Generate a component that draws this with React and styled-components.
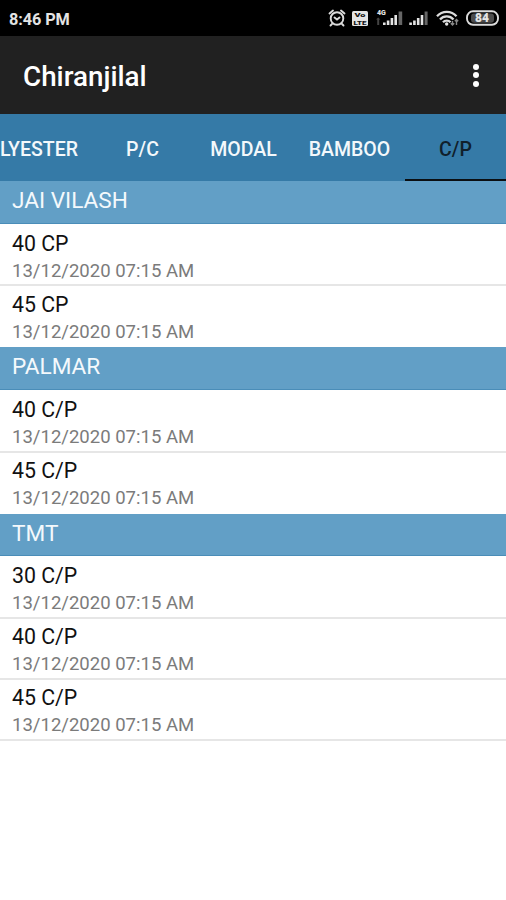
import styled, {createGlobalStyle} from 'styled-components';

const GlobalStyle = createGlobalStyle`
    * {
        box-sizing: border-box;
    }

    body {
        margin: 0;
        background-color: #fff;
        font-family: Roboto, "Liberation Sans", sans-serif;
    }
`;

const Screen = styled.div`
    width: 506px;
    height: 900px;
    overflow: hidden;
    background-color: #fff;
`;

const StatusBar = styled.header`
    display: flex;
    align-items: center;
    justify-content: space-between;
    height: 36px;
    padding: 0 7px 0 9px;
    background-color: #000;
    color: #e4e4e4;
`;

const Clock = styled.span`
    padding-top: 2px;
    font-size: 16.3px;
    font-weight: 700;
    letter-spacing: -0.1px;
`;

const StatusIcons = styled.svg`
    display: block;
    width: 172px;
    height: 24px;
`;

const AppBar = styled.div`
    display: flex;
    align-items: center;
    justify-content: space-between;
    height: 78.3px;
    padding: 3px 27px 0 23px;
    background-color: #212121;
`;

const Title = styled.h1`
    margin: 0;
    color: #fff;
    font-size: 27.8px;
    font-weight: 500;
`;

const MenuButton = styled.button`
    display: flex;
    flex-direction: column;
    gap: 2.5px;
    margin-top: -3px;
    padding: 0;
    border: none;
    background: none;
`;

const Dot = styled.span`
    width: 6px;
    height: 6px;
    border-radius: 50%;
    background-color: #fff;
`;

const TabBar = styled.nav`
    display: flex;
    justify-content: flex-end;
    height: 67px;
    background-color: #357aa7;
`;

const Tab = styled.button`
    flex: none;
    width: ${({$width}) => $width}px;
    padding: 5px 0 0;
    border: none;
    border-bottom: 2px solid ${({$active}) => ($active ? '#0b0f12' : 'transparent')};
    background: none;
    color: ${({$active}) => ($active ? '#10202b' : '#f3f8fb')};
    font-family: inherit;
    font-size: 19.5px;
    font-weight: 500;
    white-space: nowrap;
`;

const Group = styled.section`
    &:not(:last-child) > :last-child {
        border-bottom-color: transparent;
    }
`;

const GroupHeader = styled.h2`
    height: 42.3px;
    margin: 0;
    padding: 0 12px;
    border-bottom: 1px solid #4a8db8;
    background-color: #629fc6;
    color: #f4f9fc;
    font-size: 22.6px;
    font-weight: 400;
    line-height: 40px;
`;

const Row = styled.div`
    height: ${({$first}) => ($first ? 62.9 : 61)}px;
    padding: ${({$first}) => ($first ? 7.5 : 5.6)}px 12px 0;
    border-bottom: 2px solid #e6e6e6;
`;

const RowTitle = styled.div`
    color: #111;
    font-size: 21.3px;
    line-height: 26px;
`;

const RowDate = styled.div`
    color: #7b7b7b;
    font-size: 18.55px;
    line-height: 28px;
`;

const tabs = [
    {name: 'POLYESTER', width: 132},
    {name: 'P/C', width: 101},
    {name: 'MODAL', width: 101},
    {name: 'BAMBOO', width: 111},
    {name: 'C/P', width: 101, active: true},
];

const groups = [
    {name: 'JAI VILASH', items: ['40 CP', '45 CP']},
    {name: 'PALMAR', items: ['40 C/P', '45 C/P']},
    {name: 'TMT', items: ['30 C/P', '40 C/P', '45 C/P']},
];

const App = () => (
    <>
        <GlobalStyle/>
        <Screen>
            <StatusBar>
                <Clock>8:46 PM</Clock>
                <StatusIcons viewBox="327 6 172 24" fill="#e4e4e4">
                    {/* alarm */}
                    <g fill="none" stroke="#dcdcdc" strokeWidth="1.9" strokeLinecap="round">
                        <circle cx="337" cy="18.5" r="6.3"/>
                        <path d="M329.5 13.5l3.5-3M344.5 13.5l-3.5-3M332 24l-1.5 1.5M342 24l1.5 1.5M334.5 17.5l2.5 2 2.5-2"/>
                    </g>
                    {/* volte */}
                    <rect x="352" y="11" width="16" height="15" rx="1.5"/>
                    <g fill="#111" fontFamily="Roboto, sans-serif" fontSize="6" fontWeight="900">
                        <text x="354.5" y="17.4" textLength="11" lengthAdjust="spacingAndGlyphs">Vo</text>
                        <text x="353.5" y="24.6" textLength="13" lengthAdjust="spacingAndGlyphs">LTE</text>
                    </g>
                    {/* signal bars */}
                    <text x="377" y="14.8" fontFamily="Roboto, sans-serif" fontSize="7" fontWeight="900">4G</text>
                    <path d="M376 19.5l2.2-2 2.2 2h-1.2V25h-2v-5.5z" fill="#444"/>
                    <path d="M383 22.5h2.6V25H383zM386.8 20.5h2.6V25h-2.6zM390.6 18h2.6v7h-2.6zM394.4 15h2.6v10h-2.6z"/>
                    <path d="M398.6 11.5h3.6V25h-3.6z" fill="#666"/>
                    <path d="M409.3 22.5h2.6V25h-2.6zM413.1 20.5h2.6V25h-2.6zM416.9 18h2.6v7h-2.6zM420.7 15h2.6v10h-2.6z"/>
                    <path d="M424.6 11.5h3V25h-3z" fill="#666"/>
                    {/* wifi */}
                    <g fill="none" stroke="#dcdcdc" strokeWidth="2.3">
                        <path d="M437 16.2a13.2 13.2 0 0 1 19.5 0M440 19.4a9 9 0 0 1 13.5 0M443 22.3a5 5 0 0 1 7.5 0"/>
                    </g>
                    <circle cx="446.7" cy="24" r="1.7"/>
                    <path d="M452.5 21v4M450.8 23.3l1.7 1.7 1.7-1.7M456.5 25v-5.5M454.8 21.3l1.7-1.8 1.7 1.8" fill="none" stroke="#888" strokeWidth="1.4"/>
                    {/* battery */}
                    <rect x="467" y="11.3" width="31" height="13.5" rx="6" fill="none" stroke="#dcdcdc" strokeWidth="1.9"/>
                    <rect x="471" y="13.5" width="23" height="9.2" rx="3" fill="#4c4c4c"/>
                    <text x="482" y="22.3" textAnchor="middle" fontFamily="Roboto, sans-serif" fontSize="12" fontWeight="900">84</text>
                </StatusIcons>
            </StatusBar>
            <AppBar>
                <Title>Chiranjilal</Title>
                <MenuButton aria-label="More options">
                    <Dot/>
                    <Dot/>
                    <Dot/>
                </MenuButton>
            </AppBar>
            <TabBar>
                {tabs.map(({name, width, active}) => (
                    <Tab key={name} $width={width} $active={active}>{name}</Tab>
                ))}
            </TabBar>
            {groups.map(({name, items}) => (
                <Group key={name}>
                    <GroupHeader>{name}</GroupHeader>
                    {items.map((item, index) => (
                        <Row key={item} $first={index === 0}>
                            <RowTitle>{item}</RowTitle>
                            <RowDate>13/12/2020 07:15 AM</RowDate>
                        </Row>
                    ))}
                </Group>
            ))}
        </Screen>
    </>
);

export default App;
